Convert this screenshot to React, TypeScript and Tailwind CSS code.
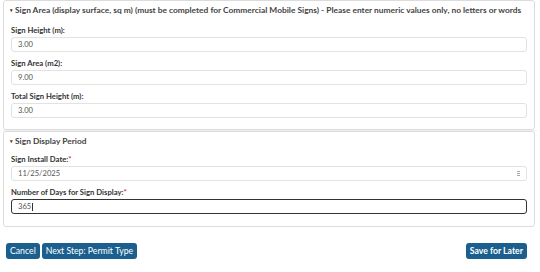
import React from 'react';

const font = { fontFamily: 'Lato, "Open Sans", sans-serif' };

const Field = ({ label, value, required, focused, date, first }: { label: string; value: string; required?: boolean; focused?: boolean; date?: boolean; first?: boolean }) => (
  <div className={first ? '' : 'mt-[7px]'}>
    <div className="h-[8px] text-[7.7px] leading-[8px] font-bold text-[#333] px-[7px]">
      {label}
      {required && <span className="text-[#c0392b]">*</span>}
    </div>
    <div
      className={`mt-[3px] mx-[7px] h-[15px] rounded-[3px] flex items-center px-[6px] text-[7.6px] text-[#555] bg-white ${
        focused ? 'border border-[#333]' : 'border border-[#e2e2e2]'
      }`}
    >
      <span>{value}</span>
      {focused && <span className="w-px h-[8px] bg-[#333] ml-px" />}
      {date && (
        <span className="ml-auto flex flex-col gap-px">
          <span className="w-[3px] h-px bg-[#aaa]" />
          <span className="w-[3px] h-px bg-[#aaa]" />
          <span className="w-[3px] h-px bg-[#aaa]" />
        </span>
      )}
    </div>
  </div>
);

const Header = ({ text }: { text: string }) => (
  <div className="h-[10px] text-[8.4px] leading-[10px] font-bold text-[#444] px-[6px] flex items-center gap-[2px] whitespace-nowrap">
    <span className="text-[5px]">▾</span>
    <span>{text}</span>
  </div>
);

export default function App() {
  return (
    <div className="w-[540px] h-[272px] bg-white overflow-hidden" style={font}>
      <div className="mx-[3px] w-[532px] border border-[#dcdcdc] rounded-[3px] pt-[4px] pb-[11px]">
        <Header text="Sign Area (display surface, sq m) (must be completed for Commercial Mobile Signs) - Please enter numeric values only, no letters or words" />
        <div className="mt-[11px]">
          <Field first label="Sign Height (m):" value="3.00" />
          <Field label="Sign Area (m2):" value="9.00" />
          <Field label="Total Sign Height (m):" value="3.00" />
        </div>
      </div>
      <div className="h-[1px] bg-[#eeeeee] mx-[3px]" />
      <div className="mx-[3px] w-[532px] border border-[#dcdcdc] rounded-[3px] pt-[4px] pb-[12px]">
        <Header text="Sign Display Period" />
        <div className="mt-[9px]">
          <Field first label="Sign Install Date:" value="11/25/2025" required date />
          <Field label="Number of Days for Sign Display:" value="365" required focused />
        </div>
      </div>
      <div className="mt-[16px] px-[6px] flex items-center">
        <button className="h-[16px] px-[4px] rounded-[3px] bg-[#1b5f8e] text-white text-[8.7px] leading-none">Cancel</button>
        <button className="ml-[2px] h-[16px] px-[4px] rounded-[3px] bg-[#1b5f8e] text-white text-[8.7px] leading-none">Next Step: Permit Type</button>
        <button className="ml-auto mr-[7px] h-[16px] px-[4px] rounded-[3px] bg-[#1b5f8e] text-white text-[8.7px] font-bold leading-none">Save for Later</button>
      </div>
    </div>
  );
}
